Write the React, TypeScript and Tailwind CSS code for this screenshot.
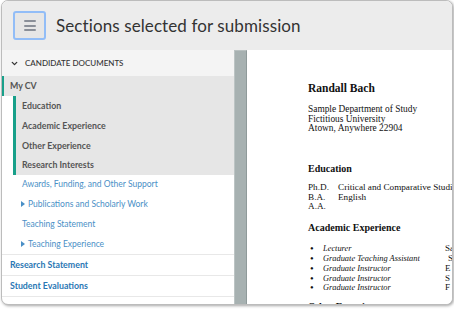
import React from "react";
import { ChevronDown } from "lucide-react";

const sans = { fontFamily: "Lato, 'Open Sans', sans-serif" };
const serif = { fontFamily: "'Liberation Serif', 'Times New Roman', serif" };

function Tri() {
  return (
    <span className="inline-block w-0 h-0 border-y-[3px] border-y-transparent border-l-[4px] border-l-[#4a8fc6] mr-[3px] mb-px" />
  );
}

export default function App() {
  const subGray = ["Education", "Academic Experience", "Other Experience", "Research Interests"];
  return (
    <div className="w-[454px] h-[310px] bg-white overflow-hidden" style={sans}>
      <div className="ml-px w-[452px] h-[305px] rounded-[7px] border border-[#bcbcbc] overflow-hidden flex flex-col bg-white shadow-[1px_1px_3px_rgba(0,0,0,0.35)]">
        <div className="h-[49px] shrink-0 bg-[#ececec] flex items-center pl-[11px] gap-[10px]">
          <div className="w-[33px] h-[29px] rounded-[3px] border-2 border-[#92bdf7] bg-[#e6e6e6] flex flex-col items-center justify-center gap-[2.5px]">
            <div className="w-[12px] h-[2px] bg-[#8a8f98] rounded-full" />
            <div className="w-[12px] h-[2px] bg-[#8a8f98] rounded-full" />
            <div className="w-[12px] h-[2px] bg-[#8a8f98] rounded-full" />
          </div>
          <div className="text-[17px] text-[#333] tracking-[0.1px]">Sections selected for submission</div>
        </div>
        <div className="flex flex-1 min-h-0">
          <div className="w-[232px] shrink-0 flex flex-col">
            <div className="h-[26px] bg-[#f4f4f4] flex items-center pl-[8px] gap-[6px] text-[8px] text-[#333] font-medium">
              <ChevronDown size={9} strokeWidth={3.5} color="#333" />
              <span>CANDIDATE DOCUMENTS</span>
            </div>
            <div className="h-[20px] bg-[#e6e6e6] border-l-2 border-[#18a08a] flex items-center pl-[6px] text-[8.8px] font-bold text-[#555]">
              My CV
            </div>
            {subGray.map((s, i) => (
              <div key={s} className={`ml-[11px] ${i === 1 ? "h-[19.5px]" : "h-[19.8px]"} bg-[#e6e6e6] border-l-[3px] border-[#18a08a] flex items-center pl-[6px] text-[8.8px] font-bold text-[#555]`}>
                {s}
              </div>
            ))}
            <div className="h-[19.8px] flex items-center pl-[20px] text-[8.5px] text-[#4a8fc6]">Awards, Funding, and Other Support</div>
            <div className="h-[19.8px] flex items-center pl-[19px] text-[8.5px] text-[#4a8fc6]"><Tri />Publications and Scholarly Work</div>
            <div className="h-[19.8px] flex items-center pl-[20px] text-[8.5px] text-[#4a8fc6]">Teaching Statement</div>
            <div className="h-[19.8px] flex items-center pl-[19px] text-[8.5px] text-[#4a8fc6]"><Tri />Teaching Experience</div>
            <div className="h-[21px] border-t border-[#e8e8e8] flex items-center pl-[8px] text-[8.8px] font-bold text-[#2a77b4]">Research Statement</div>
            <div className="h-[21px] border-t border-[#e8e8e8] flex items-center pl-[8px] text-[8.8px] font-bold text-[#2a77b4]">Student Evaluations</div>
            <div className="border-t border-[#e8e8e8]" />
          </div>
          <div className="w-[13px] shrink-0 bg-[#a7b1b1] border-l border-[#bcc4c4] border-r border-r-[#8f9a9a] border-t border-t-[#b9c1c1]" />
          <div className="flex-1 min-w-0 overflow-hidden bg-white pl-[61px] pt-[31px] text-[#111] whitespace-nowrap" style={serif}>
            <div className="text-[11.5px] font-bold leading-[14px]">Randall Bach</div>
            <div className="mt-[10px] text-[9.4px] leading-[9.6px]">
              <div>Sample Department of Study</div>
              <div>Fictitious University</div>
              <div>Atown, Anywhere 22904</div>
            </div>
            <div className="mt-[29px] text-[10px] font-bold leading-[12px]">Education</div>
            <div className="mt-[8px] text-[9.2px] leading-[9.8px]">
              <div className="flex"><span className="w-[30px] shrink-0">Ph.D.</span><span>Critical and Comparative Studies in</span></div>
              <div className="flex"><span className="w-[30px] shrink-0">B.A.</span><span>English</span></div>
              <div className="flex"><span className="w-[30px] shrink-0">A.A.</span><span></span></div>
            </div>
            <div className="mt-[10px] text-[10px] font-bold leading-[12px]">Academic Experience</div>
            <div className="mt-[10px] text-[9px] leading-[9.8px]">
              {[
                ["Lecturer", "Sa", 137],
                ["Graduate Teaching Assistant", "S", 140],
                ["Graduate Instructor", "E", 137],
                ["Graduate Instructor", "S", 137],
                ["Graduate Instructor", "F", 137],
              ].map(([t, r, w], i) => (
                <div key={i} className="flex items-center h-[9.8px]">
                  <span className="w-[15px] shrink-0 pl-[2px] text-[10.5px] leading-[9.8px]">•</span>
                  <span className="italic text-[8.4px] shrink-0" style={{ width: (w as number) - 15 }}>{t}</span>
                  <span>{r}</span>
                </div>
              ))}
            </div>
            <div className="mt-[8px] text-[10px] font-bold leading-[12px]">Other Experience</div>
          </div>
        </div>
      </div>
    </div>
  );
}
